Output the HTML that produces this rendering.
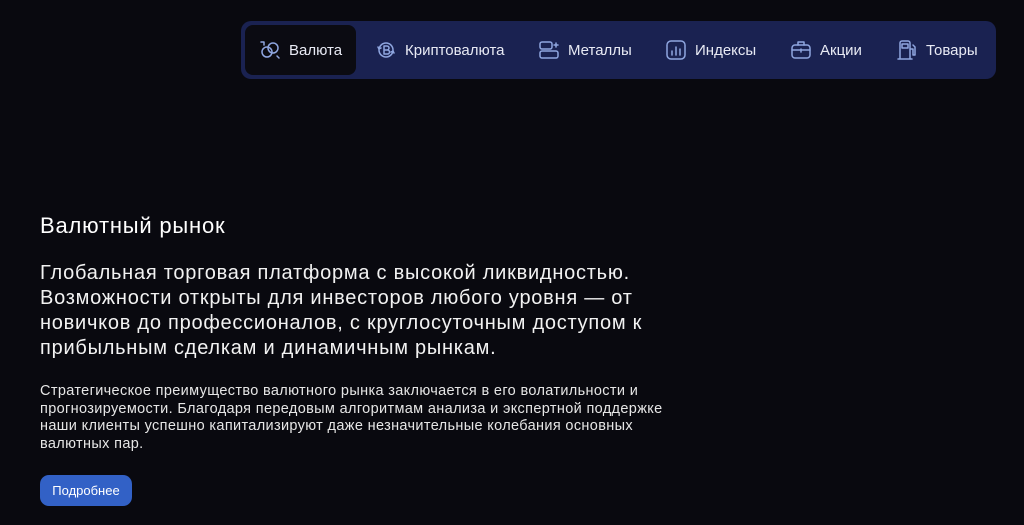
<!DOCTYPE html>
<html><head><meta charset="utf-8"><style>
*{margin:0;padding:0;box-sizing:border-box}
body{width:1024px;height:525px;background:#09090f;color:#fff;font-family:"Liberation Sans",sans-serif;position:relative;overflow:hidden}
.nav{position:absolute;left:241px;top:21px;width:755px;height:58px;background:#1a2251;border-radius:10px}
.tab{position:absolute;top:0;height:58px;display:flex;align-items:center;font-size:15px;color:#e8eaf4;white-space:nowrap}
.tab svg{width:22px;height:22px;margin-right:8px;fill:none;stroke:#8fa6e0;stroke-width:1.5;stroke-linecap:round;stroke-linejoin:round}
.active{position:absolute;left:4px;top:4px;width:111px;height:50px;background:#0b0b12;border-radius:8px}
h2{position:absolute;left:40px;top:213px;font-size:22px;letter-spacing:0.8px;font-weight:normal}
.lead{position:absolute;left:40px;top:261px;width:615px;font-size:20px;letter-spacing:0.75px;line-height:25px;color:#f2f2f2}
.small{position:absolute;left:40px;top:383px;width:655px;font-size:14.5px;letter-spacing:0.35px;line-height:17.5px;color:#e6e6e6}
.btn{position:absolute;left:40px;top:475px;width:92px;height:31px;background:#3261c6;border-radius:9px;font-size:13px;display:flex;align-items:center;justify-content:center;color:#fff}
</style></head><body>
<div class="nav">
<div class="active"></div>
<div class="tab" style="left:18px"><svg viewBox="0 0 22 22"><circle cx="8" cy="13" r="5"/><circle cx="14" cy="9" r="5"/><path d="M2 3h3v3M18 17l2 2"/></svg>Валюта</div>
<div class="tab" style="left:134px"><svg viewBox="0 0 22 22"><circle cx="11" cy="11" r="7"/><path d="M9 7v8M9 7h3a2 2 0 0 1 0 4H9h3.5a2 2 0 0 1 0 4H9M3 8l1 2 2-1M19 14l-1-2-2 1"/></svg>Криптовалюта</div>
<div class="tab" style="left:297px"><svg viewBox="0 0 22 22"><rect x="2" y="3" width="12" height="7" rx="2"/><rect x="2" y="12" width="18" height="7" rx="2"/><path d="M18 4v4M16 6h4"/></svg>Металлы</div>
<div class="tab" style="left:424px"><svg viewBox="0 0 22 22"><rect x="2" y="2" width="18" height="18" rx="4"/><path d="M7 16v-4M11 16V8M15 16v-6"/></svg>Индексы</div>
<div class="tab" style="left:549px"><svg viewBox="0 0 22 22"><rect x="2" y="6" width="18" height="13" rx="3"/><path d="M8 6V3h6v3M2 11h18M11 10v3"/></svg>Акции</div>
<div class="tab" style="left:655px"><svg viewBox="0 0 22 22"><path d="M4 20V4a2 2 0 0 1 2-2h6a2 2 0 0 1 2 2v16M2 20h14M6 5h6v4H6zM14 10h3v6h2V8l-2-2"/></svg>Товары</div>
</div>
<h2>Валютный рынок</h2>
<div class="lead">Глобальная торговая платформа с высокой ликвидностью. Возможности открыты для инвесторов любого уровня — от новичков до профессионалов, с круглосуточным доступом к прибыльным сделкам и динамичным рынкам.</div>
<div class="small">Стратегическое преимущество валютного рынка заключается в его волатильности и прогнозируемости. Благодаря передовым алгоритмам анализа и экспертной поддержке наши клиенты успешно капитализируют даже незначительные колебания основных валютных пар.</div>
<div class="btn">Подробнее</div>
</body></html>
